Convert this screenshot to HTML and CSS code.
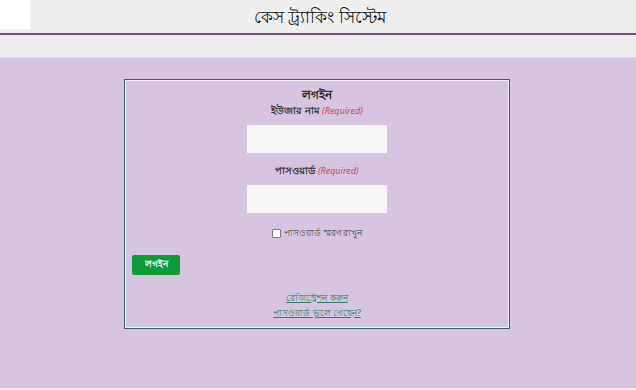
FILE: index.html
```html
<!DOCTYPE html>
<html lang="bn">
<head>
<meta charset="utf-8">
<link rel="stylesheet" href="styles.css">
</head>
<body>
<header class="header">
  <div class="logo-box"></div>
  <h1 class="title">কেস ট্র্যাকিং সিস্টেম</h1>
</header>
<nav class="nav"></nav>
<main class="main">
  <form class="login">
    <div class="login-title">লগইন</div>
    <div class="label">ইউজার নাম <span class="req">(Required)</span></div>
    <input class="field" type="text">
    <div class="label label-pass">পাসওয়ার্ড <span class="req">(Required)</span></div>
    <input class="field" type="password">
    <label class="remember"><span class="check"></span>পাসওয়ার্ড স্মরণ রাখুন</label>
    <div class="btn-row"><button class="btn" type="button">লগইন</button></div>
    <div class="links">
      <a href="#" class="link">রেজিস্ট্রেশন করুন</a>
      <a href="#" class="link">পাসওয়ার্ড ভুলে গেছেন?</a>
    </div>
  </form>
</main>
<div class="footer"></div>
</body>
</html>
```
FILE: styles.css
```css
html, body {
  margin: 0;
  padding: 0;
  background: #f5eef8;
  font-family: "Noto Sans", "DejaVu Sans", sans-serif;
}
.header {
  position: relative;
  height: 33px;
  background: #efefef;
  border-bottom: 2px solid #6f4f86;
  display: flex;
  justify-content: center;
  align-items: flex-end;
}
.logo-box {
  position: absolute;
  left: 0;
  top: 0;
  width: 30px;
  height: 29px;
  background: #ffffff;
}
.title {
  margin: 0 0 3px 4px;
  font-size: 17px;
  font-weight: 500;
  color: #111;
  line-height: 26px;
}
.nav {
  height: 22px;
  background: #eeeeee;
  border-bottom: 1px solid #e3dbe6;
}
.main {
  height: 330px;
  background: #d7c5df;
  padding-top: 21px;
  box-sizing: border-box;
}
.login {
  width: 386px;
  height: 250px;
  margin: 0 auto;
  box-sizing: border-box;
  border: 1px solid #35665e;
  box-shadow: inset 1px 1px 0 #f4eef6, inset -1px -1px 0 #f4eef6;
  display: flex;
  flex-direction: column;
  align-items: center;
  padding-top: 6px;
  transform: translateX(-1px);
}
.login-title {
  font-size: 12px;
  font-weight: bold;
  color: #222;
  line-height: 18px;
}
.label {
  font-size: 9.5px;
  font-weight: bold;
  color: #333;
  line-height: 14px;
}
.label-pass {
  margin-top: 11px;
}
.req {
  font-weight: normal;
  font-style: italic;
  color: #c0485a;
  font-size: 9px;
}
.field {
  width: 140px;
  height: 28px;
  box-sizing: border-box;
  border: none;
  background: #f7f7f7;
  margin-top: 7px;
  padding: 0;
}
.remember {
  margin-top: 14px;
  font-size: 8.5px;
  color: #444;
  display: flex;
  align-items: center;
  gap: 3px;
  line-height: 12px;
}
.check {
  width: 7px;
  height: 7px;
  border: 1px solid #777;
  background: #fff;
  border-radius: 1px;
}
.btn-row {
  align-self: stretch;
  padding-left: 7px;
  margin-top: 11px;
}
.btn {
  width: 48px;
  height: 20px;
  border: none;
  border-radius: 2px;
  background: #0e9c38;
  color: #fff;
  font-family: inherit;
  font-size: 9px;
  font-weight: bold;
  padding: 0;
}
.links {
  margin-top: 16px;
  display: flex;
  flex-direction: column;
  align-items: center;
  gap: 1px;
}
.link {
  font-size: 9px;
  color: #2e7a66;
  line-height: 14px;
}
.footer {
  height: 3px;
  background: #f5eef8;
}
```
